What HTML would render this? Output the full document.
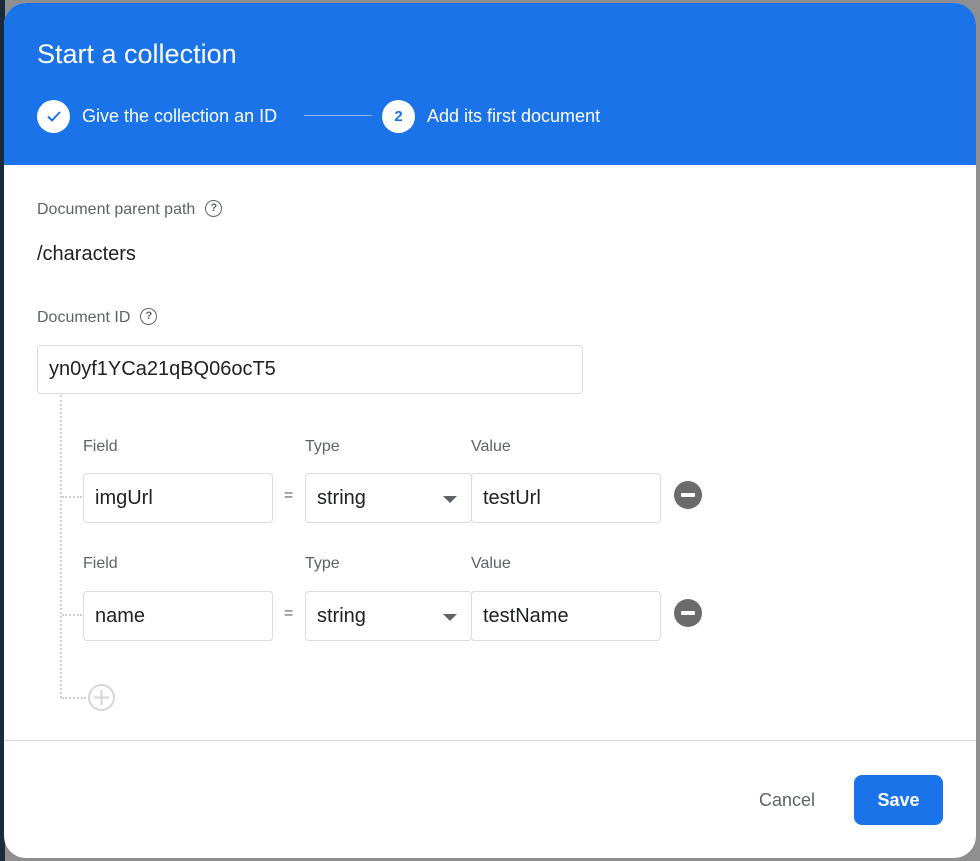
<!DOCTYPE html>
<html><head><style>
html,body{margin:0;padding:0;width:980px;height:861px;overflow:hidden;background:#8f8f8f;font-family:"Liberation Sans",sans-serif;}
.left{position:absolute;left:0;top:0;width:5px;height:861px;background:#1b2a3c;}
.dlg{position:absolute;left:4px;top:3px;width:972px;height:855px;background:#fff;border-radius:22px;overflow:hidden;}
.hdr{position:absolute;left:0;top:0;width:100%;height:162px;background:#1a73e8;color:#fff;}
.title{position:absolute;left:33px;top:36px;font-size:27px;}
.step{position:absolute;top:96px;height:34px;display:flex;align-items:center;font-size:18px;}
.circ{width:33px;height:33px;border-radius:50%;background:#fff;color:#1a73e8;display:flex;align-items:center;justify-content:center;font-size:15px;font-weight:bold;margin-right:12px;}
.line{position:absolute;left:300px;top:112px;width:68px;height:1px;background:#8ab4f8;}
.lbl{position:absolute;font-size:16px;color:#5f6368;}
.q{display:inline-block;width:15px;height:15px;border:1.6px solid #5f6368;border-radius:50%;font-size:11px;text-align:center;line-height:15px;font-weight:bold;vertical-align:middle;margin-left:10px;position:relative;top:-1px;}
.box{position:absolute;border:1px solid #dadce0;border-radius:4px;font-size:20px;color:#202124;box-sizing:border-box;padding-left:11px;display:flex;align-items:center;}
.arrow{position:absolute;right:14px;top:22px;width:0;height:0;border-left:7px solid transparent;border-right:7px solid transparent;border-top:7px solid #5f6368;}
.minus{position:absolute;width:28px;height:28px;border-radius:50%;background:#6b6b6b;}
.minus:after{content:"";position:absolute;left:7px;top:12px;width:14px;height:4px;background:#fff;border-radius:1px;}
.eq{position:absolute;font-size:16px;color:#5f6368;}
.dv{position:absolute;border-left:2px dotted #d0d0d0;}
.dh{position:absolute;border-top:2px dotted #d0d0d0;}
</style></head><body>
<div class="left"></div>
<div class="dlg">
 <div class="hdr">
  <div class="title">Start a collection</div>
  <div class="step" style="left:33px"><div class="circ"><svg width="18" height="18" viewBox="0 0 18 18"><path d="M3 9.5l4 4L15 5" stroke="#1a73e8" stroke-width="2" fill="none"/></svg></div>Give the collection an ID</div>
  <div class="line"></div>
  <div class="step" style="left:378px"><div class="circ">2</div>Add its first document</div>
 </div>
 <div class="lbl" style="left:33px;top:198px">Document parent path<span class="q">?</span></div>
 <div style="position:absolute;left:33px;top:240px;font-size:20px;color:#202124">/characters</div>
 <div class="lbl" style="left:33px;top:306px">Document ID<span class="q">?</span></div>
 <div class="box" style="left:33px;top:342px;width:546px;height:49px">yn0yf1YCa21qBQ06ocT5</div>
 <div class="dv" style="left:56px;top:392px;height:303px"></div>
 <div class="dh" style="left:58px;top:493px;width:20px"></div>
 <div class="dh" style="left:58px;top:611px;width:20px"></div>
 <div class="dh" style="left:58px;top:694px;width:24px"></div>
 <svg style="position:absolute;left:83px;top:680px" width="29" height="29" viewBox="0 0 29 29"><circle cx="14.5" cy="14.5" r="12.5" stroke="#d5d5d5" stroke-width="2" fill="none"/><path d="M14.5 7v15M7 14.5h15" stroke="#d5d5d5" stroke-width="2"/></svg>

 <div class="lbl" style="left:79px;top:435px">Field</div>
 <div class="lbl" style="left:301px;top:435px">Type</div>
 <div class="lbl" style="left:467px;top:435px">Value</div>
 <div class="box" style="left:79px;top:470px;width:190px;height:50px">imgUrl</div>
 <div class="eq" style="left:280px;top:484px">=</div>
 <div class="box" style="left:301px;top:470px;width:167px;height:50px">string<div class="arrow"></div></div>
 <div class="box" style="left:467px;top:470px;width:190px;height:50px">testUrl</div>
 <div class="minus" style="left:670px;top:478px"></div>

 <div class="lbl" style="left:79px;top:552px">Field</div>
 <div class="lbl" style="left:301px;top:552px">Type</div>
 <div class="lbl" style="left:467px;top:552px">Value</div>
 <div class="box" style="left:79px;top:588px;width:190px;height:50px">name</div>
 <div class="eq" style="left:280px;top:602px">=</div>
 <div class="box" style="left:301px;top:588px;width:167px;height:50px">string<div class="arrow"></div></div>
 <div class="box" style="left:467px;top:588px;width:190px;height:50px">testName</div>
 <div class="minus" style="left:670px;top:596px"></div>

 <div style="position:absolute;left:0;top:737px;width:100%;height:1px;background:#dadce0"></div>
 <div style="position:absolute;left:755px;top:787px;font-size:18px;color:#5f6368">Cancel</div>
 <div style="position:absolute;left:850px;top:772px;width:89px;height:50px;background:#1a73e8;border-radius:8px;color:#fff;font-size:18px;font-weight:bold;display:flex;align-items:center;justify-content:center">Save</div>
</div>
</body></html>
